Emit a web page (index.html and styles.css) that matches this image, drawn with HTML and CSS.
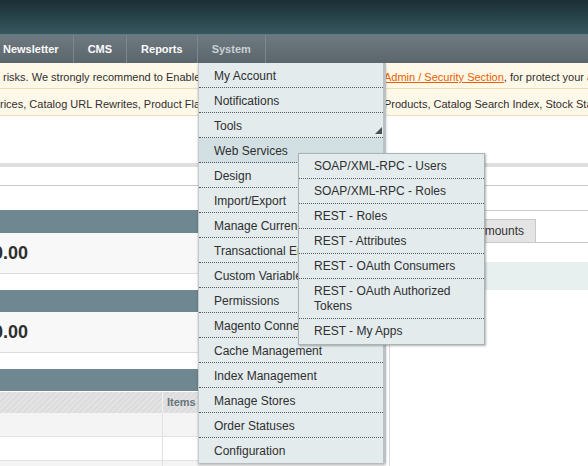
FILE: index.html
```html
<!DOCTYPE html>
<html>
<head>
<meta charset="utf-8">
<title>Magento Admin</title>
<link rel="stylesheet" href="styles.css">
</head>
<body>
<div class="page">
  <div class="header"></div>
  <div class="nav">
    <ul class="nav-list">
      <li class="nav-item">Newsletter</li>
      <li class="nav-item">CMS</li>
      <li class="nav-item">Reports</li>
      <li class="nav-item active">System</li>
    </ul>
  </div>

  <div class="notices">
    <div class="notice"><span class="n-left">risks. We strongly recommend to Enable Secret Key in URLs option in</span><a class="n-link" href="#">Admin / Security Section</a>, for protect your admin area.</div>
    <div class="notice"><span class="n-left">rices, Catalog URL Rewrites, Product Flat Data, Category Flat Data, Category</span>Products, Catalog Search Index, Stock Status.</div>
  </div>

  <div class="page-head"></div>
  <div class="switcher"></div>

  <div class="content">
    <div class="col-left">
      <div class="box-head"></div>
      <div class="box-body"><span class="amount">$0.00</span></div>
      <div class="box-head"></div>
      <div class="box-body"><span class="amount">$0.00</span></div>
      <div class="box-head"></div>
      <div class="grid">
        <div class="grid-row grid-head"><span class="cell c1"></span><span class="cell c2">Items</span></div>
        <div class="grid-row odd"><span class="cell c1"></span><span class="cell c2"></span></div>
        <div class="grid-row"><span class="cell c1"></span><span class="cell c2"></span></div>
        <div class="grid-row odd"><span class="cell c1"></span><span class="cell c2"></span></div>
      </div>
    </div>
    <div class="col-right">
      <div class="tabs"><span class="tab">Orders</span><span class="tab">Amounts</span></div>
      <div class="chart-strip"></div>
    </div>
  </div>

  <ul class="dropdown">
    <li class="dd-item">My Account</li>
    <li class="dd-item">Notifications</li>
    <li class="dd-item parent">Tools<svg class="arrow" width="7" height="7" viewBox="0 0 7 7"><polygon points="0,7 7,0 7,7" fill="#4a4f52"/></svg></li>
    <li class="dd-item hover">Web Services</li>
    <li class="dd-item">Design</li>
    <li class="dd-item">Import/Export</li>
    <li class="dd-item">Manage Currency</li>
    <li class="dd-item">Transactional Emails</li>
    <li class="dd-item">Custom Variables</li>
    <li class="dd-item">Permissions</li>
    <li class="dd-item">Magento Connect</li>
    <li class="dd-item">Cache Management</li>
    <li class="dd-item">Index Management</li>
    <li class="dd-item">Manage Stores</li>
    <li class="dd-item">Order Statuses</li>
    <li class="dd-item last">Configuration</li>
  </ul>

  <ul class="submenu">
    <li class="dd-item">SOAP/XML-RPC - Users</li>
    <li class="dd-item">SOAP/XML-RPC - Roles</li>
    <li class="dd-item">REST - Roles</li>
    <li class="dd-item">REST - Attributes</li>
    <li class="dd-item">REST - OAuth Consumers</li>
    <li class="dd-item wrap">REST - OAuth Authorized Tokens</li>
    <li class="dd-item last">REST - My Apps</li>
  </ul>
</div>
</body>
</html>
```

FILE: styles.css
```css
* { box-sizing: border-box; }

html, body {
  margin: 0;
  padding: 0;
  background: #fff;
}

body {
  font-family: "Liberation Sans", Arial, sans-serif;
  color: #2f2f2f;
}

.page {
  position: relative;
  width: 588px;
  height: 466px;
  overflow: hidden;
}

.header {
  height: 35px;
  background: linear-gradient(#1b2e35, #36585f);
  border-bottom: 1px solid #5f7a82;
}

.nav {
  height: 28px;
  background: linear-gradient(#6f7980, #5b656c);
}

.nav-list {
  list-style: none;
  margin: 0 0 0 -11px;
  padding: 0;
  display: flex;
  height: 28px;
}

.nav-item {
  padding: 0 14px;
  line-height: 28px;
  font-size: 11px;
  font-weight: bold;
  color: #fbfbfb;
  border-right: 1px solid #7e878d;
  white-space: nowrap;
}

.nav-item.active {
  color: #c9d0d4;
}

.notices {
  background: #fef8e8;
}

.notice {
  height: 27px;
  padding-top: 4px;
  line-height: 22px;
  font-size: 11px;
  color: #2f2f2f;
  border-bottom: 1px solid #e9ddb8;
  white-space: nowrap;
  overflow: hidden;
  display: flex;
}

.notice:first-child {
  height: 26px;
  padding-top: 4px;
  line-height: 21px;
  padding-left: 3px;
}

.n-left {
  display: block;
  overflow: hidden;
  flex: none;
  width: 381px;
}

.notice:last-child .n-left {
  width: 384px;
}

.n-link {
  color: #eb5e00;
  text-decoration: underline;
}

.page-head {
  height: 51px;
  border-bottom: 4px solid #dedede;
}

.switcher {
  height: 19px;
  border-bottom: 1px solid #c9c9c9;
}

.content {
  display: flex;
  gap: 5px;
  padding-top: 24px;
}

.col-left {
  width: 384px;
  flex: none;
}

.box-head {
  height: 22px;
  background: #6e8791;
}

.col-left > .box-head:first-child {
  height: 23px;
}

.box-body {
  height: 41px;
  background: #f8f8f8;
  border-bottom: 1px solid #dcdcdc;
  line-height: 40px;
  margin-bottom: 16px;
  white-space: nowrap;
  overflow: hidden;
}

.amount {
  display: inline-block;
  margin-left: -17px;
  font-size: 18px;
  font-weight: bold;
  color: #2f2f2f;
}

.grid {
  margin-top: 1px;
}

.grid-row {
  display: flex;
  height: 24px;
  border-bottom: 1px solid #dfe3e3;
}

.grid-row.odd {
  background: #f4f4f4;
}

.grid-head {
  height: 21px;
  border-bottom: none;
  background: repeating-linear-gradient(135deg, #e3e3e3 0, #e3e3e3 2px, #dcdcdc 2px, #dcdcdc 4px);
}

.cell.c1 {
  width: 163px;
  border-right: 1px solid #dde1e2;
}

.grid-head .cell.c1 {
  border-right: 1px solid #f2f2f2;
}

.cell.c2 {
  flex: 1;
  padding-left: 4px;
  font-size: 11px;
  font-weight: bold;
  color: #66767d;
  line-height: 21px;
}

.col-right {
  flex: 1;
  border-left: 1px solid #d9d9d9;
  border-top: 1px solid #cccccc;
  height: 260px;
}

.tabs {
  display: flex;
  padding: 8px 0 0 15px;
  border-bottom: 1px solid #c8c8c8;
}

.tab {
  height: 23px;
  line-height: 22px;
  padding: 0 11px;
  font-size: 12px;
  color: #333;
  background: #e4e4e4;
  border: 1px solid #c8c8c8;
  border-bottom: none;
}

.tab + .tab {
  border-left: none;
}

.chart-strip {
  margin-top: 19px;
  height: 28px;
  background: #e8efef;
}

/* dropdown menu (overlay) */
.dropdown, .submenu {
  list-style: none;
  margin: 0;
  padding: 0;
  position: absolute;
  background: #e3ebed;
}

.dropdown {
  left: 198px;
  top: 63px;
  width: 188px;
  border-left: 1px solid #c3cbce;
  border-right: 3px solid #b9c1c4;
  box-shadow: 0 2px 2px rgba(0, 0, 0, 0.25);
}

.dd-item {
  position: relative;
  height: 25px;
  padding-top: 2px;
  line-height: 22px;
  padding-left: 15px;
  font-size: 12px;
  color: #2f2f2f;
  border-bottom: 1px dotted #5a5a5a;
  white-space: nowrap;
}

.dd-item.last {
  border-bottom: none;
}

.dd-item.hover {
  background: #d2dfe3;
}

.arrow {
  position: absolute;
  right: 1px;
  bottom: 3px;
}

.submenu {
  left: 298px;
  top: 153px;
  width: 187px;
  border: 1px solid #a9b3b6;
  box-shadow: 1px 1px 2px rgba(0, 0, 0, 0.3);
}

.submenu .dd-item {
  padding-top: 1px;
  line-height: 23px;
}

.submenu .dd-item.wrap {
  height: 40px;
  line-height: 15px;
  padding-top: 5px;
  padding-right: 20px;
  white-space: normal;
}
```
